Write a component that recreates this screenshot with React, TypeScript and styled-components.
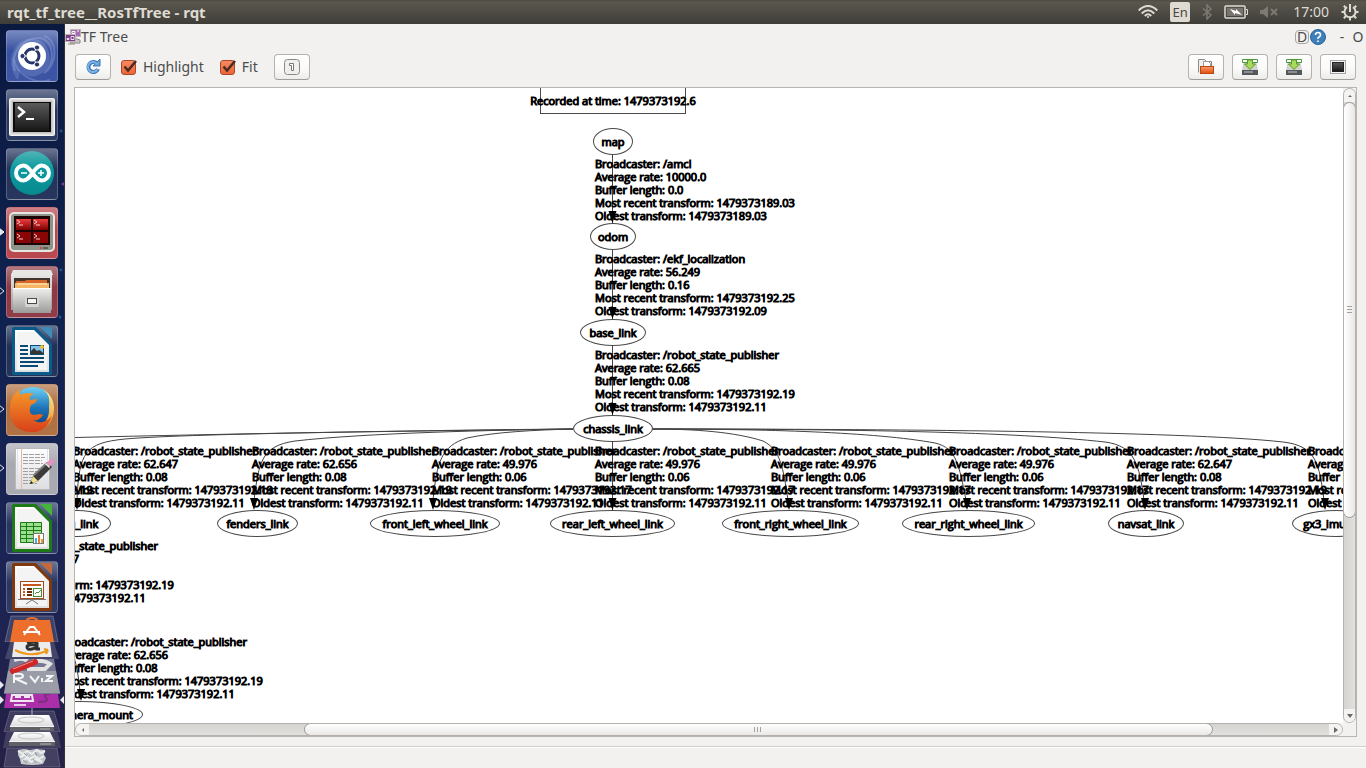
import React from 'react';
import styled, { createGlobalStyle, css } from 'styled-components';

const GlobalStyle = createGlobalStyle`
  *, *::before, *::after { box-sizing: border-box; }
  body { margin: 0; background: #f2f1f0; overflow: hidden; }
  button, input { margin: 0; padding: 0; font: inherit; color: inherit; }
`;

const Desktop = styled.div`
  display: flex;
  flex-direction: column;
  height: 100vh;
  font-family: 'Noto Sans', 'Open Sans', sans-serif;
  font-size: 14px;
  line-height: 20px;
  color: #4c4c4c;
`;

const MenuBar = styled.header`
  display: flex;
  align-items: center;
  justify-content: space-between;
  flex: none;
  height: 24px;
  padding: 0 7px;
  background: linear-gradient(#4d4b42, #5a574f 2px, #3e3d38);
  color: #dfdbd2;
`;

const WindowTitle = styled.h1`
  margin: 0;
  font-size: 15px;
  line-height: 24px;
  font-weight: 700;
`;

const Indicators = styled.div`
  display: flex;
  align-items: center;
  gap: 12px;
`;

const Indicator = styled.button`
  display: flex;
  border: 0;
  background: none;
`;

const LanguageBadge = styled(Indicator)`
  justify-content: center;
  width: 20px;
  height: 20px;
  border-radius: 2px;
  background: #dfdbd2;
  color: #4a4842;
  font-size: 13px;
`;

const Clock = styled(Indicator)`
  margin-left: 3px;
`;

const Body = styled.div`
  display: flex;
  flex: 1;
  min-height: 0;
`;

const Launcher = styled.nav`
  display: flex;
  flex-direction: column;
  flex: none;
  width: 65px;
  overflow: hidden;
  border-right: 1px solid #30333f;
  background:
    radial-gradient(circle at 61px 107px, #2f6da8 0, transparent 2px),
    radial-gradient(circle at 61px 246px, #2f6da8 0, transparent 2px),
    radial-gradient(circle at 60px 293px, #2f6da8 0, transparent 2px),
    radial-gradient(circle at 63px 160px, #b04fc0 0, transparent 2px),
    linear-gradient(#0a1940, #102250 40%, #1c2454 75%, #252046);
`;

const TileList = styled.div`
  display: flex;
  flex-direction: column;
  gap: 7px;
  padding: 6px 6px 2px;
`;

const Tile = styled.button<{ $tint: string; $mark?: 'solid' | 'open' }>`
  position: relative;
  display: block;
  width: 52px;
  height: 52px;
  border: 1px solid rgba(255, 255, 255, 0.22);
  border-radius: 4px;
  background: linear-gradient(rgba(255, 255, 255, 0.36), rgba(255, 255, 255, 0.06) 40%, rgba(255, 255, 255, 0.08)), ${p => p.$tint};
  > svg { display: block; margin: -1px; }
`;

const RunningMark = styled.svg`
  position: absolute;
  left: -6px;
  top: 20px;
`;

const FoldedList = styled.div`
  display: flex;
  flex-direction: column;
`;

const FoldedTile = styled.button`
  display: block;
  border: 0;
  background: none;
  svg { display: block; }
`;

const Window = styled.main`
  display: flex;
  flex-direction: column;
  flex: 1;
  min-width: 0;
  background: #f2f1f0;
`;

const DockHeader = styled.div`
  display: flex;
  align-items: center;
  justify-content: space-between;
  height: 26px;
`;

const DockTitle = styled.h2`
  display: flex;
  align-items: center;
  margin: 0;
  font-size: 14px;
  font-weight: 400;
`;

const DockActions = styled.div`
  display: flex;
  align-items: center;
`;

const DockButton = styled.button<{ $boxed?: boolean }>`
  display: flex;
  align-items: center;
  justify-content: center;
  width: 16px;
  height: 16px;
  border: 0;
  background: none;
  ${p => p.$boxed && css`
    width: 14px;
    height: 14px;
    margin-right: 1px;
    border: 1px solid #a9a5a0;
    border-radius: 4px;
  `}
  &:nth-child(3) { margin-left: 8px; }
`;

const Toolbar = styled.div`
  display: flex;
  align-items: center;
  gap: 10px;
  padding: 4px 10px 7px;
`;

const ToolButton = styled.button`
  display: flex;
  align-items: center;
  justify-content: center;
  width: 36px;
  height: 26px;
  border: 1px solid #b6b2ae;
  border-bottom-color: #a09d99;
  border-radius: 4px;
  background: linear-gradient(#ffffff, #f9f9f8 60%, #ececeb);
`;

const ToolGroup = styled.div`
  display: flex;
  gap: 8px;
  margin-left: auto;
`;

const CheckLabel = styled.label`
  display: grid;
  grid-template-columns: 16px auto;
  align-items: center;
  column-gap: 6px;
  margin-right: 6px;
`;

const CheckInput = styled.input`
  grid-area: 1 / 1;
  appearance: none;
  width: 15px;
  height: 15px;
  border: 1px solid #a8482a;
  border-radius: 3px;
  background: linear-gradient(#f58a63, #ee6437);
`;

const CheckGlyph = styled.svg`
  grid-area: 1 / 1;
  pointer-events: none;
  overflow: visible;
`;

const Frame = styled.section`
  display: grid;
  grid-template: minmax(0, 1fr) 13px / minmax(0, 1fr) 13px;
  flex: 1;
  min-height: 0;
  margin: 0 9px;
  border: 1px solid #b9b6b1;
`;

const Viewport = styled.div`
  position: relative;
  overflow: hidden;
  background: #ffffff;
  color: #000000;
  font-family: 'Open Sans', 'Noto Sans', sans-serif;
  font-size: 11px;
  -webkit-text-stroke: 1px #000000;
`;

const Edges = styled.svg`
  position: absolute;
  left: 0;
  top: 0;
  overflow: visible;
`;

const GraphNode = styled.div<{ $x: number; $y: number; $w: number }>`
  position: absolute;
  display: flex;
  align-items: center;
  justify-content: center;
  left: ${p => p.$x}px;
  top: ${p => p.$y}px;
  width: ${p => p.$w}px;
  height: 27px;
  border: 1px solid #4a4a4a;
  border-radius: 50%;
  white-space: nowrap;
`;

const RecordBox = styled(GraphNode)`
  border-radius: 0;
`;

const EdgeLabel = styled.div<{ $x: number; $y: number }>`
  position: absolute;
  display: grid;
  grid-template-rows: repeat(5, 1fr);
  align-items: center;
  left: ${p => p.$x}px;
  top: ${p => p.$y}px;
  height: 64px;
  line-height: 12px;
  white-space: nowrap;
`;

const ScrollTrack = styled.div<{ $vertical?: boolean }>`
  display: flex;
  flex-direction: ${p => (p.$vertical ? 'column' : 'row')};
  border: 1px solid #b5b1ac;
  border-radius: 7px;
  background: ${p => `linear-gradient(${p.$vertical ? '90deg' : '180deg'}, #d6d4d1, #e2e0de)`};
  overflow: hidden;
`;

const ScrollArrow = styled.button<{ $vertical?: boolean }>`
  display: flex;
  align-items: center;
  justify-content: center;
  flex: none;
  width: ${p => (p.$vertical ? 11 : 13)}px;
  height: ${p => (p.$vertical ? 13 : 11)}px;
  border: 0;
  background: #f4f3f2;
`;

const ScrollSpace = styled.div<{ $grow: number }>`
  flex: ${p => p.$grow} 1 0;
`;

const ScrollThumb = styled.div<{ $grow: number; $vertical?: boolean }>`
  display: flex;
  align-items: center;
  justify-content: center;
  flex: ${p => p.$grow} 1 0;
  margin: ${p => (p.$vertical ? '0 -1px' : '-1px 0')};
  border: 1px solid #9c9995;
  border-radius: 7px;
  background: ${p => `linear-gradient(${p.$vertical ? '90deg' : '180deg'}, #ffffff, #e9e8e7)`};
`;

const StatusBar = styled.footer`
  flex: none;
  height: 22px;
  margin-top: 9px;
  border-top: 1px solid #d2cfcb;
  box-shadow: inset 0 1px #ffffff;
`;

type NodeInfo = { name: string; x: number; y: number; w: number };

const NODES: NodeInfo[] = [
  { name: 'map', x: 518, y: 40, w: 40 },
  { name: 'odom', x: 515, y: 135, w: 46 },
  { name: 'base_link', x: 505, y: 231, w: 66 },
  { name: 'chassis_link', x: 498, y: 327, w: 80 },
  { name: 'imu_link', x: -32, y: 422, w: 68 },
  { name: 'fenders_link', x: 142, y: 422, w: 81 },
  { name: 'front_left_wheel_link', x: 295, y: 422, w: 130 },
  { name: 'rear_left_wheel_link', x: 475, y: 422, w: 125 },
  { name: 'front_right_wheel_link', x: 647, y: 422, w: 137 },
  { name: 'rear_right_wheel_link', x: 827, y: 422, w: 133 },
  { name: 'navsat_link', x: 1033, y: 422, w: 76 },
  { name: 'gx3_imu_link', x: 1217, y: 422, w: 88 },
  { name: 'front_camera_mount', x: -60, y: 613, w: 128 },
];

type LabelInfo = { x: number; y: number; by: string; rate: string; length: string; recent: string; oldest: string };

const RSP = '/robot_state_publisher';

const LABELS: LabelInfo[] = [
  { x: 520, y: 70, by: '/amcl', rate: '10000.0', length: '0.0', recent: '1479373189.03', oldest: '1479373189.03' },
  { x: 520, y: 165, by: '/ekf_localization', rate: '56.249', length: '0.16', recent: '1479373192.25', oldest: '1479373192.09' },
  { x: 520, y: 261, by: RSP, rate: '62.665', length: '0.08', recent: '1479373192.19', oldest: '1479373192.11' },
  { x: -182, y: 357, by: RSP, rate: '62.647', length: '0.08', recent: '1479373192.19', oldest: '1479373192.11' },
  { x: -2, y: 357, by: RSP, rate: '62.647', length: '0.08', recent: '1479373192.19', oldest: '1479373192.11' },
  { x: 177, y: 357, by: RSP, rate: '62.656', length: '0.08', recent: '1479373192.19', oldest: '1479373192.11' },
  { x: 357, y: 357, by: RSP, rate: '49.976', length: '0.06', recent: '1479373192.17', oldest: '1479373192.11' },
  { x: 520, y: 357, by: RSP, rate: '49.976', length: '0.06', recent: '1479373192.17', oldest: '1479373192.11' },
  { x: 696, y: 357, by: RSP, rate: '49.976', length: '0.06', recent: '1479373192.17', oldest: '1479373192.11' },
  { x: 874, y: 357, by: RSP, rate: '49.976', length: '0.06', recent: '1479373192.17', oldest: '1479373192.11' },
  { x: 1052, y: 357, by: RSP, rate: '62.647', length: '0.08', recent: '1479373192.19', oldest: '1479373192.11' },
  { x: 1233, y: 357, by: RSP, rate: '62.647', length: '0.08', recent: '1479373192.19', oldest: '1479373192.11' },
  { x: -101, y: 452, by: RSP, rate: '62.647', length: '0.08', recent: '1479373192.19', oldest: '1479373192.11' },
  { x: -12, y: 548, by: RSP, rate: '62.656', length: '0.08', recent: '1479373192.19', oldest: '1479373192.11' },
];

const EDGE_PATHS = [
  'M537.500 67V135', 'M537.500 162V231', 'M537.500 258V327', 'M537.500 354V422',
  'M498 341C360 342 150 346 0 349.500',
  'M498 341C360 343 120 345 50 351C10 355 4 364 2 412',
  'M498 341C420 342 290 345 220 353C186 358 184 374 179 412',
  'M498 341C460 342 420 344 392 350C366 358 362 374 358 412',
  'M577 341C620 341 660 344 688 353C706 362 708 380 713 412',
  'M577 341C690 341 800 344 860 355C882 360 884 378 891 412',
  'M577 341C780 341 940 344 1030 354C1060 358 1064 376 1069 412',
  'M577 341C800 341 1110 343 1208 354C1242 358 1244 376 1249 412',
  'M-2 566Q3 580 5 604',
];

const ARROWS: [number, number][] = [
  [537.5, 135], [537.5, 231], [537.5, 327], [537.5, 422], [2, 422], [179, 422], [358, 422],
  [714, 422], [892, 422], [1070, 422], [1250, 422], [6, 613],
];

const Graph = () => (
  <Viewport>
    <Edges width="1268" height="635" fill="none" stroke="#444" strokeWidth="1" aria-hidden="true">
      {EDGE_PATHS.map(d => <path key={d} d={d} />)}
      {ARROWS.map(([x, y]) => <path key={`${x}-${y}`} fill="#000" stroke="none" d={`M${x - 4} ${y - 12}h8l-4 12z`} />)}
    </Edges>
    <RecordBox $x={465} $y={-1} $w={146}>Recorded at time: 1479373192.6</RecordBox>
    {NODES.map(n => <GraphNode key={n.name} $x={n.x} $y={n.y} $w={n.w}>{n.name}</GraphNode>)}
    {LABELS.map(l => (
      <EdgeLabel key={`${l.x}-${l.y}`} $x={l.x} $y={l.y}>
        <span>Broadcaster: {l.by}</span>
        <span>Average rate: {l.rate}</span>
        <span>Buffer length: {l.length}</span>
        <span>Most recent transform: {l.recent}</span>
        <span>Oldest transform: {l.oldest}</span>
      </EdgeLabel>
    ))}
  </Viewport>
);

const Gradients = () => (
  <svg width="0" height="0" style={{ position: 'absolute' }} aria-hidden="true">
    <defs>
      <linearGradient id="silver" x2="0" y2="1"><stop stopColor="#f0f0ee" /><stop offset="1" stopColor="#9b9b99" /></linearGradient>
      <linearGradient id="paper" x2="0" y2="1"><stop stopColor="#ffffff" /><stop offset="1" stopColor="#dedede" /></linearGradient>
      <linearGradient id="screen" x2="0" y2="1"><stop stopColor="#5a5a5a" /><stop offset="1" stopColor="#161616" /></linearGradient>
      <linearGradient id="red" x2="0" y2="1"><stop stopColor="#f03c3c" /><stop offset="1" stopColor="#7c0000" /></linearGradient>
      <linearGradient id="teal" x2="0" y2="1"><stop stopColor="#4fb5b5" /><stop offset=".4" stopColor="#0b9a9f" /><stop offset="1" stopColor="#078a90" /></linearGradient>
      <linearGradient id="globe" x2="0" y2="1"><stop stopColor="#6fd0f5" /><stop offset=".5" stopColor="#1c74b8" /><stop offset="1" stopColor="#0d3c7c" /></linearGradient>
      <linearGradient id="fox" x2="0" y2="1"><stop stopColor="#f79a28" /><stop offset="1" stopColor="#d8401a" /></linearGradient>
      <linearGradient id="flame" x2="0" y2="1"><stop stopColor="#fff3a0" /><stop offset="1" stopColor="#ec8a1a" /></linearGradient>
      <linearGradient id="folder" x2="0" y2="1"><stop stopColor="#f79a6e" /><stop offset="1" stopColor="#e2500f" /></linearGradient>
    </defs>
  </svg>
);

const DashIcon = () => (
  <svg width="52" height="52" viewBox="0 0 52 52" fill="none">
    <path d="M9 41C3 24 16 7 35 8C49 12 49 34 38 43C52 34 52 10 38 6" stroke="#a9b8e4" strokeOpacity=".35" strokeWidth="2" />
    <path d="M12 50C0 36 4 14 21 9C36 6 47 19 43 34C38 47 22 51 14 40Z" fill="#a8b9e8" fillOpacity=".22" />
    <path d="M44 50C30 55 10 45 8 29" stroke="#a9b8e4" strokeOpacity=".3" strokeWidth="2" />
    <circle cx="26" cy="26" r="14" fill="#fff" />
    <circle cx="26" cy="26" r="7" stroke="#27356b" strokeWidth="3" />
    <path d="M26 26L13 26M26 26L32.500 14.700M26 26L32.500 37.300" stroke="#fff" strokeWidth="1" />
    <g fill="#27356b" stroke="#fff"><circle cx="16.500" cy="26" r="2.600" /><circle cx="31" cy="17.500" r="2.600" /><circle cx="31" cy="34.500" r="2.600" /></g>
  </svg>
);

const TerminalIcon = () => (
  <svg width="52" height="52" viewBox="0 0 52 52" fill="none">
    <rect x="3.500" y="9.500" width="45" height="37" rx="1" fill="#e2e2e0" stroke="#f2f2f0" />
    <rect x="5.500" y="11.500" width="41" height="33" fill="#c2c2c0" />
    <rect x="7" y="13" width="38" height="30" fill="#0c0c0c" />
    <rect x="9" y="14" width="34" height="28" fill="url(#screen)" />
    <path d="M12 18l6 5-6 5" stroke="#fff" strokeWidth="2.500" /><path d="M20 30h8" stroke="#fff" strokeWidth="2" />
  </svg>
);

const ArduinoIcon = () => (
  <svg width="52" height="52" viewBox="0 0 52 52" fill="none">
    <circle cx="26" cy="25" r="22" fill="url(#teal)" />
    <path d="M26.500 25C23 20 20.500 17.500 17.500 17.500a7.500 7.500 0 0 0 0 15C21 32.500 23 30 26.500 25s6-7.500 9-7.500a7.500 7.500 0 0 1 0 15C32.500 32.500 30 30 26.500 25z" stroke="#fff" strokeWidth="4" />
    <path d="M15 25h6M32 25h6M35 22v6" stroke="#fff" strokeWidth="1.500" />
  </svg>
);

const TerminatorIcon = () => (
  <svg width="52" height="52" viewBox="0 0 52 52" fill="none">
    <rect x="4" y="6" width="44" height="38" rx="4" fill="#8f948b" stroke="#e6e6e2" strokeWidth="2" />
    <rect x="8" y="9" width="36" height="29" fill="#1d0505" />
    <rect x="10" y="12" width="15" height="11" fill="url(#red)" /><rect x="27" y="12" width="15" height="11" fill="url(#red)" />
    <rect x="10" y="25" width="15" height="11" fill="#8a0606" /><rect x="27" y="25" width="15" height="11" fill="#8a0606" />
    <path d="M11 13l3 2-3 2M13 18h4M28 13l3 2-3 2M30 18h4M11 27l3 2-3 2M13 32h4M28 27l3 2-3 2M30 32h4" stroke="#f6caca" />
    <circle cx="35" cy="41" r="1" fill="#ff2626" /><path d="M37 41h5" stroke="#5d6159" strokeWidth="2" />
  </svg>
);

const FilesIcon = () => (
  <svg width="52" height="52" viewBox="0 0 52 52" fill="none">
    <path d="M7 5l2-1h34l3 2v38H5V9z" fill="url(#silver)" />
    <path d="M7 4h38l2 5H5z" fill="#e6e6e4" />
    <rect x="8" y="12" width="36" height="12" fill="#3f3430" />
    <path d="M10 15h9l1-1h21v9H9z" fill="#d7652a" /><path d="M9 17h34v5H9z" fill="#f5b564" /><path d="M11 18h30" stroke="#fff0c8" />
    <path d="M7 22h38v25H7z" fill="url(#silver)" /><path d="M7 22.500h38" stroke="#fff" />
    <rect x="19" y="30" width="14" height="11" rx="2" fill="#d5d5d3" /><rect x="21.500" y="32.500" width="9" height="5" fill="#f5f5f5" stroke="#4a4a4a" />
  </svg>
);

const OfficeSheet = ({ color, light, children }: { color: string; light: string; children: React.ReactNode }) => (
  <svg width="52" height="52" viewBox="0 0 52 52" fill="none">
    <path d="M8 2h22l16 17v29a2 2 0 0 1-2 2H8a2 2 0 0 1-2-2V4a2 2 0 0 1 2-2z" fill={color} />
    <path d="M34 2h10a2 2 0 0 1 2 2v10z" fill={light} />
    <path d="M9 5h19l15 15v27H9z" fill="url(#paper)" /><path d="M11 7h17l13 13v25H11z" fill="#f4f4f4" />
    {children}
  </svg>
);

const WriterIcon = () => (
  <OfficeSheet color="#0b5a8a" light="#3f8cba">
    <path d="M14 21h8M14 25h8M14 29h8M14 33h24M14 37h24M14 41h18" stroke="#0b4a72" strokeWidth="2" />
    <rect x="24.500" y="20.500" width="13" height="9" fill="#84c3ea" stroke="#0b4a72" /><circle cx="36" cy="22" r="2" fill="#f0c02c" />
    <path d="M25 29v-3l3-3 3 3 2-1 2 1 2 2v1z" fill="#353535" />
  </OfficeSheet>
);

const CalcIcon = () => (
  <OfficeSheet color="#1d7a16" light="#45b53a">
    <rect x="14" y="20" width="22" height="21" fill="#9be08f" />
    <path d="M14.500 20.500h21v20h-21zM14 24.500h22M14 28.500h22M14 32.500h22M14 36.500h22M20.500 20v21M27.500 20v21" stroke="#1d7a16" />
    <rect x="27.500" y="31.500" width="10" height="10" fill="#fff" stroke="#777" />
    <path d="M29 36h2v5h-2z" fill="#3bb0e8" /><path d="M32 33h2v8h-2z" fill="#f07a2a" /><path d="M35 37h2v4h-2z" fill="#e0a030" />
  </OfficeSheet>
);

const ImpressIcon = () => (
  <OfficeSheet color="#82380f" light="#c26a3e">
    <rect x="14.500" y="20.500" width="23" height="17" fill="#fff" stroke="#a8481a" />
    <path d="M17 24h18" stroke="#c8561f" strokeWidth="2" />
    <path d="M17 28h2M17 31h2M17 34h2" stroke="#c8561f" strokeWidth="2" /><path d="M21 28h5M21 31h5M21 34h5" stroke="#6b2b0a" strokeWidth="2" />
    <rect x="27.500" y="27.500" width="8" height="8" stroke="#4b8f3b" /><path d="M29 33l2-2 1 1 3-3" stroke="#4b8f3b" />
    <path d="M12 38.500h28M26 39l-6 4M26 39l6 4" stroke="#777" />
  </OfficeSheet>
);

const FirefoxIcon = () => (
  <svg width="52" height="52" viewBox="0 0 52 52" fill="none">
    <circle cx="27" cy="24" r="21" fill="url(#globe)" />
    <path d="M36 5C43 9 44 15 43 23C44 33 39 42 28 46C40 47 49 37 48 22C47 15 43 8 36 5z" fill="url(#flame)" />
    <path d="M7 12C9 9 11 8 13 6L14 11C18 9 22 8 28 10C23 12 23 14 24 16L31 15C31 18 28 20 25 21C23 26 23 30 28 31C31 31 33 29 37 31C35 35 31 37 27 36C35 41 41 37 46 32C42 44 34 49 24 48C10 47 3 37 4 25C4 20 5 15 7 12z" fill="url(#fox)" />
  </svg>
);

const GeditIcon = () => (
  <svg width="52" height="52" viewBox="0 0 52 52" fill="none">
    <rect x="9.500" y="5.500" width="34" height="41" fill="url(#paper)" stroke="#b9b9b9" />
    <path d="M15.500 6v40" stroke="#f0b0b0" /><path d="M11.500 6v40M41.500 6v40" stroke="#d6e4f6" />
    <path d="M17 11.500h21M17 14.500h22M17 17.500h19M17 20.500h20M17 25.500h21M17 28.500h14M17 31.500h12M17 34.500h10M17 37.500h8M17 40.500h14" stroke="#a0a0a0" strokeDasharray="5 1" />
    <path d="M24 41l3-8 14-14 5 5-14 14z" fill="#3b3b3b" /><path d="M24 41l3-8 5 5z" fill="#f0df8a" /><path d="M24 41l1-3 2 2z" fill="#111" />
    <path d="M28 32l13-12" stroke="#7a7a7a" strokeWidth="2" />
    <path d="M40 20l5-4q2-1 3 1t-1 3l-4 4z" fill="#e592c0" /><path d="M39 21l4 4 1-1-4-4z" fill="#e8e8e8" />
  </svg>
);

const TILES: { name: string; tint: string; icon: React.ReactNode; mark?: 'solid' | 'open' }[] = [
  { name: 'Dash', tint: '#2c479c', icon: <DashIcon /> },
  { name: 'Terminal', tint: '#1a2a55', icon: <TerminalIcon /> },
  { name: 'Arduino IDE', tint: '#15264f', icon: <ArduinoIcon /> },
  { name: 'Terminator', tint: '#b23a40', icon: <TerminatorIcon />, mark: 'solid' },
  { name: 'Files', tint: '#862c38', icon: <FilesIcon />, mark: 'open' },
  { name: 'LibreOffice Writer', tint: '#13244e', icon: <WriterIcon /> },
  { name: 'Firefox', tint: '#aa6636', icon: <FirefoxIcon />, mark: 'open' },
  { name: 'Text Editor', tint: '#a2a4ad', icon: <GeditIcon />, mark: 'open' },
  { name: 'LibreOffice Calc', tint: '#1b2a58', icon: <CalcIcon /> },
  { name: 'LibreOffice Impress', tint: '#1b2a58', icon: <ImpressIcon /> },
];

const strip = (height: number) => ({ width: 64, height, viewBox: `0 0 64 ${height}`, fill: 'none' });

const FOLDED: { name: string; icon: React.ReactNode }[] = [
  { name: 'Ubuntu Software Center', icon: (
    <svg {...strip(27)}>
      <path d="M11 1h42l5 26H5z" fill="#fff" fillOpacity=".14" stroke="#fff" strokeOpacity=".25" />
      <path d="M14 5h36l4 22H10z" fill="#ee6f2c" /><path d="M26 8q0-5 6-5t6 5" stroke="#ee6f2c" strokeWidth="2" />
      <path d="M24 20l6-8h4l6 8M23 17h17" stroke="#fff" strokeWidth="2" />
    </svg>) },
  { name: 'Amazon', icon: (
    <svg {...strip(17)}>
      <path d="M10 0h44l5 17H5z" fill="#fff" fillOpacity=".16" /><path d="M14 0h36l2 15H12z" fill="#ececec" />
      <path d="M27 1q8-3 10 0v6h3M36 3q-9-1-9 2t5 2 4-3" stroke="#303030" strokeWidth="3" />
      <path d="M15 8q15 8 32 1M48 8l-4-1M48 8l-2 4" stroke="#f09a1c" strokeWidth="2" />
    </svg>) },
  { name: 'RViz', icon: (
    <svg {...strip(35)}>
      <path d="M10 0h44l6 35H4z" fill="#c9ccd8" fillOpacity=".5" /><path d="M8 12h48l4 22H4z" fill="#a7a8ae" fillOpacity=".75" />
      <path d="M14 1q10-3 13 1M33 2q12-1 17 3l-5 5H27" stroke="#e3e3e3" strokeWidth="4" />
      <path d="M13 12l22-9" stroke="#cf2626" strokeWidth="6" strokeLinecap="round" /><path d="M13 10l20-8" stroke="#f09090" />
      <path d="M14 15v9M14 15q9-1 9 2t-9 2l13 6M30 17l5 6 4-6M42 19v4M46 17h6l-6 5h7" stroke="#f4f4f4" strokeWidth="2" />
      <path d="M0 22v8l4-4z" fill="#e8e8ee" />
    </svg>) },
  { name: 'rqt', icon: (
    <svg {...strip(14)}>
      <path d="M6 0h52l2 14H4z" fill="#aa2fa8" />
      <path d="M12 1h20l1 6H11zM15 3h6M24 3h6" stroke="#f0e6f0" strokeWidth="2" /><path d="M14 11h12" stroke="#e8c8e8" strokeWidth="2" />
      <path d="M38 8q12 0 8-4t4-4" stroke="#7f2f80" strokeWidth="2" />
      <path d="M0 2v8l4-4zM64 2v8l-4-4z" fill="#e8e8ee" />
    </svg>) },
  { name: 'Disk 1', icon: (
    <svg {...strip(24)}>
      <path d="M10 3h44l6 21H4z" fill="#fff" fillOpacity=".13" stroke="#fff" strokeOpacity=".2" />
      <path d="M32 0v12" stroke="#fff" strokeOpacity=".6" />
      <path d="M15 7h34l5 11H10z" fill="url(#paper)" /><path d="M10 19h44v4H10z" fill="#606166" /><path d="M10 18.500h44" stroke="#f4f4f4" /><path d="M40 21h10" stroke="#bbb" />
      <ellipse cx="31" cy="12" rx="13" ry="3" stroke="#c4c4c4" />
    </svg>) },
  { name: 'Disk 2', icon: (
    <svg {...strip(16)}>
      <path d="M6 0h52l3 16H3z" fill="#fff" fillOpacity=".13" />
      <path d="M14 0h36l5 10H9z" fill="url(#paper)" /><path d="M9 10h46v4H9z" fill="#606166" /><path d="M9 9.500h46" stroke="#f4f4f4" /><path d="M40 12h11" stroke="#bbb" />
      <ellipse cx="31" cy="4" rx="13" ry="3" stroke="#c4c4c4" />
    </svg>) },
  { name: 'Trash', icon: (
    <svg {...strip(20)}>
      <path d="M7 0h50l3 19H4z" fill="#fff" fillOpacity=".14" stroke="#fff" strokeOpacity=".2" />
      <path d="M18 2l6-1 6 1 6-1 9 1-1 5 2 3-3 6q-10 2-22 0l-1-5-2-4z" fill="#c3c7ca" />
      <path d="M18 3l5 3 4-3 5 3 5-4 4 3 4-2M20 9l5-2 4 4 6-3 4 3 5-3M22 13l5-3 4 4 5-3 6 3" stroke="#eceeee" strokeWidth="2" />
      <path d="M24 5l3 3M35 4l2 4M23 12l4 3M33 11l3 4" stroke="#90959a" />
    </svg>) },
];

const ResetIcon = () => (
  <svg width="16" height="16" viewBox="0 0 16 16" fill="none">
    <path d="M12 4.500A5 5 0 1 0 13 10" stroke="#3a78b8" strokeWidth="4" /><path d="M15 0v7H8z" fill="#6aa3d8" stroke="#3a78b8" />
    <path d="M12 5A5 5 0 1 0 12.500 10" stroke="#7fb2e2" strokeWidth="2" />
  </svg>
);

const FitIcon = () => (
  <svg width="16" height="16" viewBox="0 0 16 16" fill="none">
    <rect x=".5" y=".5" width="15" height="15" rx="3" fill="#f0efed" stroke="#8b8985" />
    <path d="M5.500 4.500h4v7h-2v-5h-2z" fill="#fff" stroke="#777" />
  </svg>
);

const OpenIcon = () => (
  <svg width="16" height="16" viewBox="0 0 16 16" fill="none">
    <path d="M.5 13.500V.5h6l2 2h5v5" fill="#f0efed" stroke="#8a8884" /><path d="M5.500 2.500h5l2 2v4h-7z" fill="#fff" stroke="#9a9894" />
    <rect x="2.500" y="7.500" width="13" height="7" fill="url(#folder)" stroke="#b8480f" />
  </svg>
);

const SaveIcon = () => (
  <svg width="16" height="16" viewBox="0 0 16 16" fill="none">
    <path d="M2 1h12l2 10v4H0v-4z" fill="#d2d2d0" /><path d="M0 11h16v5H0z" fill="#55585a" /><path d="M2 13h9" stroke="#c4c6c8" />
    <path d="M.5.500h15v3H.500z" fill="#fff" stroke="#4a9a3a" /><path d="M5.500 1v4h-3L8 10.500 13.500 5h-3V1z" fill="#a8d95a" stroke="#5a9a2a" />
  </svg>
);

const ScreenIcon = () => (
  <svg width="16" height="14" viewBox="0 0 16 14" fill="none">
    <rect x=".5" y=".5" width="15" height="13" fill="#f5f5f5" stroke="#a5a5a3" /><rect x="2.500" y="2.500" width="11" height="9" fill="url(#screen)" stroke="#222" />
  </svg>
);

const TreeIcon = () => (
  <svg width="16" height="16" viewBox="0 0 16 16" fill="none">
    <path d="M9 9l6 2v3H5z" fill="#c9c7c4" stroke="#8a8884" />
    <rect x="5.500" y=".5" width="10" height="7" fill="#a66bb0" stroke="#b9b7b4" /><path d="M7 2.500h3v2H7zM12 2h2" stroke="#fff" />
    <rect x=".5" y="5.500" width="10" height="7" fill="#7d3a88" stroke="#b9b7b4" /><path d="M2 9.500h2v1H2zM6 7.500h3v3H6z" stroke="#f0d8f0" />
    <path d="M3 15h7" stroke="#8a8884" />
  </svg>
);

const HelpIcon = () => (
  <svg width="16" height="16" viewBox="0 0 16 16" fill="none">
    <circle cx="8" cy="8" r="7.500" fill="#3f7fb9" stroke="#2a6398" />
    <path d="M5.500 6Q5.500 3.500 8 3.500T10.500 6Q10.500 7 9 8T8 10M8 11.500v1.500" stroke="#fff" strokeWidth="1.600" />
  </svg>
);

const Check = ({ label }: { label: string }) => (
  <CheckLabel>
    <CheckInput type="checkbox" defaultChecked />
    <CheckGlyph width="16" height="16" viewBox="0 0 16 16" fill="none">
      <path d="M3.500 7.500L7 11.500L15 2" stroke="#4b2b20" strokeWidth="2.500" />
    </CheckGlyph>
    {label}
  </CheckLabel>
);

const Triangle = ({ d }: { d: string }) => (
  <svg width="6" height="6" viewBox="0 0 6 6" fill="#6a6864"><path d={d} /></svg>
);

const App = () => (
  <Desktop>
    <GlobalStyle />
    <Gradients />
    <MenuBar>
      <WindowTitle>rqt_tf_tree__RosTfTree - rqt</WindowTitle>
      <Indicators>
        <Indicator aria-label="Network">
          <svg width="20" height="14" viewBox="0 0 20 14" fill="none" stroke="#dfdbd2" strokeWidth="2">
            <path d="M.7 5.500Q10-3.500 19.300 5.500M3.700 8.500Q10 2 16.300 8.500M6.800 11Q10 7.500 13.200 11" /><circle cx="10" cy="12" r="1" fill="#dfdbd2" stroke="none" />
          </svg>
        </Indicator>
        <LanguageBadge>En</LanguageBadge>
        <Indicator aria-label="Bluetooth">
          <svg width="10" height="16" viewBox="0 0 10 16" fill="none" stroke="#7d7a73" strokeWidth="1.500"><path d="M1 4.500l8 6.500-4 4V1l4 4-8 6.500" /></svg>
        </Indicator>
        <Indicator aria-label="Battery">
          <svg width="24" height="14" viewBox="0 0 24 14" fill="none">
            <rect x="1" y="1" width="20" height="12" rx="1" stroke="#dfdbd2" strokeWidth="1.500" /><rect x="3" y="3" width="16" height="8" fill="#77746d" />
            <path d="M22 4.500h1.500v5H22" stroke="#dfdbd2" /><path d="M6 4l6 2V4l6 6-7-2v2z" fill="#fff" />
          </svg>
        </Indicator>
        <Indicator aria-label="Sound">
          <svg width="18" height="12" viewBox="0 0 18 12" fill="none"><path d="M0 4h3l5-4v12L3 8H0z" fill="#7d7a73" /><path d="M11 3l6 6M17 3l-6 6" stroke="#7d7a73" strokeWidth="2" /></svg>
        </Indicator>
        <Clock>17:00</Clock>
        <Indicator aria-label="Session">
          <svg width="18" height="18" viewBox="0 0 18 18" fill="none" stroke="#dfdbd2">
            <path d="M6 4.200a5.500 5.500 0 1 0 6 0" strokeWidth="2" /><path d="M9 1v8" strokeWidth="2" />
            <path d="M3.500 9H.5M17.500 9h-3M9 14.500v3M5 13l-2.200 2.200M13 13l2.200 2.200M4.500 4.500L2.800 2.800M13.500 4.500l1.700-1.700" strokeWidth="2" />
          </svg>
        </Indicator>
      </Indicators>
    </MenuBar>
    <Body>
      <Launcher aria-label="Launcher">
        <TileList>
          {TILES.map(t => (
            <Tile key={t.name} $tint={t.tint} aria-label={t.name}>
              {t.icon}
              {t.mark && (
                <RunningMark width="6" height="10" viewBox="0 0 6 10" fill={t.mark === 'solid' ? '#e8e8ee' : 'none'} stroke="#e8e8ee">
                  <path d="M-1 1L4 5L-1 9z" />
                </RunningMark>
              )}
            </Tile>
          ))}
        </TileList>
        <FoldedList>
          {FOLDED.map(f => <FoldedTile key={f.name} aria-label={f.name}>{f.icon}</FoldedTile>)}
        </FoldedList>
      </Launcher>
      <Window>
        <DockHeader>
          <DockTitle><TreeIcon />TF Tree</DockTitle>
          <DockActions>
            <DockButton $boxed>D</DockButton>
            <DockButton aria-label="Help"><HelpIcon /></DockButton>
            <DockButton>-</DockButton>
            <DockButton>O</DockButton>
          </DockActions>
        </DockHeader>
        <Toolbar>
          <ToolButton aria-label="Refresh"><ResetIcon /></ToolButton>
          <Check label="Highlight" />
          <Check label="Fit" />
          <ToolButton aria-label="Fit in view"><FitIcon /></ToolButton>
          <ToolGroup>
            <ToolButton aria-label="Load"><OpenIcon /></ToolButton>
            <ToolButton aria-label="Save as DOT"><SaveIcon /></ToolButton>
            <ToolButton aria-label="Save as SVG"><SaveIcon /></ToolButton>
            <ToolButton aria-label="Save as image"><ScreenIcon /></ToolButton>
          </ToolGroup>
        </Toolbar>
        <Frame>
          <Graph />
          <ScrollTrack $vertical>
            <ScrollArrow $vertical aria-label="Scroll up"><Triangle d="M1 4h4L3 2z" /></ScrollArrow>
            <ScrollThumb $grow={417} $vertical>
              <svg width="5" height="9" stroke="#a5a29e"><path d="M0 .5h5M0 3.500h5M0 6.500h5" /></svg>
            </ScrollThumb>
            <ScrollSpace $grow={192} />
            <ScrollArrow $vertical aria-label="Scroll down"><Triangle d="M0 1h6L3 5z" /></ScrollArrow>
          </ScrollTrack>
          <ScrollTrack>
            <ScrollArrow aria-label="Scroll left"><Triangle d="M4 1v4L2 3z" /></ScrollArrow>
            <ScrollSpace $grow={215} />
            <ScrollThumb $grow={909}>
              <svg width="9" height="5" stroke="#a5a29e"><path d="M.5 0v5M3.500 0v5M6.500 0v5" /></svg>
            </ScrollThumb>
            <ScrollSpace $grow={116} />
            <ScrollArrow aria-label="Scroll right"><Triangle d="M1 0v6l4-3z" /></ScrollArrow>
          </ScrollTrack>
        </Frame>
        <StatusBar />
      </Window>
    </Body>
  </Desktop>
);

export default App;
